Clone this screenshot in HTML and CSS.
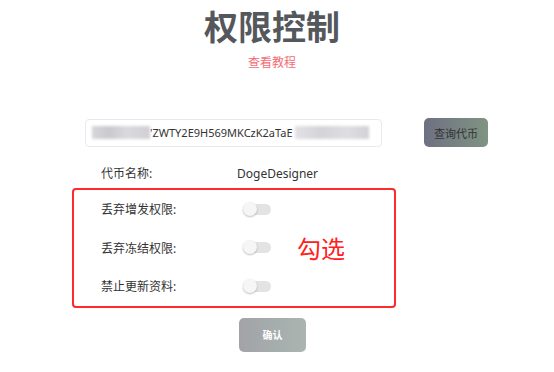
FILE: index.html
```html
<!DOCTYPE html>
<html lang="zh-CN">
<head>
    <meta charset="UTF-8">
    <meta name="viewport" content="width=device-width, initial-scale=1.0">
    <title>权限控制</title>
    <link rel="stylesheet" href="styles.css">
</head>
<body>
    <div class="page">
        <h1 class="title">权限控制</h1>
        <div class="tutorial"><a href="#">查看教程</a></div>

        <div class="query-row">
            <div class="address-input">
                <span class="mask mask-left"></span>
                <span class="address-text">'ZWTY2E9H569MKCzK2aTaE</span>
                <span class="mask mask-right"></span>
            </div>
            <button class="query-btn">查询代币</button>
        </div>

        <div class="info-row">
            <span class="info-label">代币名称:</span>
            <span class="info-value">DogeDesigner</span>
        </div>

        <div class="perm-box">
            <div class="perm-list">
                <div class="perm-row">
                    <span class="perm-label">丢弃增发权限:</span>
                    <span class="switch"><span class="knob"></span></span>
                </div>
                <div class="perm-row">
                    <span class="perm-label">丢弃冻结权限:</span>
                    <span class="switch"><span class="knob"></span></span>
                </div>
                <div class="perm-row">
                    <span class="perm-label">禁止更新资料:</span>
                    <span class="switch"><span class="knob"></span></span>
                </div>
            </div>
            <div class="perm-note">勾选</div>
        </div>

        <div class="confirm-row">
            <button class="confirm-btn">确认</button>
        </div>
    </div>
</body>
</html>
```

FILE: styles.css
```css
body {
    margin: 0;
    background: #fff;
    font-family: "Noto Sans", "Noto Sans CJK SC", sans-serif;
    color: #333;
}

.page {
    width: 544px;
}

.title {
    margin: 0;
    padding-top: 6px;
    text-align: center;
    font-size: 34px;
    line-height: 40px;
    font-weight: 700;
    color: #54585c;
    font-family: "Noto Sans CJK SC", sans-serif;
}

.tutorial {
    margin-top: 9px;
    text-align: center;
    font-size: 12px;
    line-height: 16px;
}

.tutorial a {
    color: #f36c74;
    text-decoration: none;
}

.query-row {
    display: flex;
    align-items: center;
    margin: 47px 0 0 85px;
    gap: 42px;
}

.address-input {
    width: 297px;
    height: 28px;
    box-sizing: border-box;
    border: 1px solid #e6eaee;
    border-radius: 4px;
    display: flex;
    align-items: center;
    padding-left: 6px;
    font-size: 11px;
    overflow: hidden;
}

.mask {
    height: 13px;
    filter: blur(1.5px);
}

.mask-left {
    width: 58px;
    background: linear-gradient(90deg, #d6d6da, #c9c9ce 30%, #dadade 60%, #cfcfd4);
}

.mask-right {
    width: 74px;
    margin-left: 2px;
    background: linear-gradient(90deg, #e2e2e6, #d4d4d8 35%, #dedee2 70%, #d2d2d6);
}

.address-text {
    color: #333;
}

.query-btn {
    width: 64px;
    height: 29px;
    border: none;
    border-radius: 5px;
    background: linear-gradient(90deg, #6f7082, #7f9482);
    color: #333;
    font-size: 11px;
    font-family: inherit;
    padding: 0;
}

.info-row {
    display: flex;
    margin: 19px 0 0 101px;
    font-size: 12px;
    line-height: 16px;
}

.info-label {
    width: 136px;
}

.perm-box {
    display: flex;
    margin: 6px 0 0 72px;
    width: 324px;
    box-sizing: border-box;
    border: 2px solid #ff2a2a;
    border-radius: 4px;
}

.perm-list {
    padding-left: 27px;
}

.perm-row {
    display: flex;
    align-items: center;
    height: 38.5px;
    font-size: 12px;
}

.perm-label {
    width: 142px;
}

.switch {
    position: relative;
    width: 28px;
    height: 11px;
    border-radius: 6px;
    background: #e3e3e3;
}

.knob {
    position: absolute;
    left: 0;
    top: -2px;
    width: 14px;
    height: 14px;
    border-radius: 50%;
    background: #f6f6f6;
    box-shadow: 0 1px 2px rgba(0, 0, 0, 0.25);
}

.perm-note {
    margin-left: 26px;
    align-self: center;
    font-size: 24px;
    color: #ff2020;
    font-family: "Noto Sans CJK SC", sans-serif;
}

.confirm-row {
    margin: 10px 0 0 239px;
}

.confirm-btn {
    width: 67px;
    height: 34px;
    border: none;
    border-radius: 5px;
    background: linear-gradient(90deg, #a2a3a8, #a9b5b0);
    color: #fff;
    font-size: 10px;
    font-weight: 700;
    font-family: inherit;
    padding: 0;
}
```
